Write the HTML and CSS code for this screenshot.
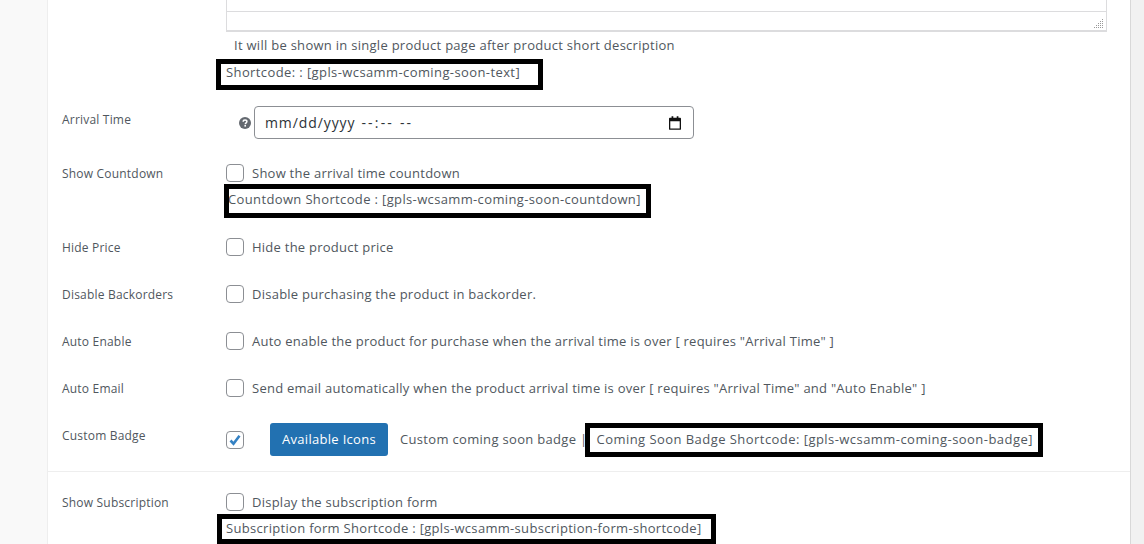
FILE: index.html
```html
<!DOCTYPE html>
<html lang="en">
<head>
<meta charset="utf-8">
<title>Coming Soon Settings</title>
<link rel="stylesheet" href="styles.css">
</head>
<body>
<main class="panel">
  <section class="group group-main">
    <div class="row row-editor">
      <div class="label"></div>
      <div class="field">
        <div class="editor">
          <div class="editor-body"></div>
          <div class="editor-status">
            <svg class="grip" width="12" height="12" viewBox="0 0 12 12"><path d="M10 1h1v1h-1zM10 3h1v1h-1zM8 3h1v1H8zM10 5h1v1h-1zM8 5h1v1H8zM6 5h1v1H6zM10 7h1v1h-1zM8 7h1v1H8zM6 7h1v1H6zM4 7h1v1H4zM10 9h1v1h-1zM8 9h1v1H8zM6 9h1v1H6zM4 9h1v1H4zM2 9h1v1H2z" fill="#999"/></svg>
          </div>
        </div>
        <p class="hint">It will be shown in single product page after product short description</p>
        <p class="code code-first"><span class="mark mark-a">Shortcode: : [gpls-wcsamm-coming-soon-text]</span></p>
      </div>
    </div>
    <div class="row row-time">
      <div class="label">Arrival Time</div>
      <div class="field field-time">
        <svg class="help" width="12" height="12" viewBox="0 0 12 12"><circle cx="6" cy="6" r="6" fill="#646970"/><path d="M4.2 4.7C4.2 3.6 5 3 6 3s1.9.6 1.9 1.6c0 1.3-1.6 1.3-1.6 2.6" fill="none" stroke="#fff" stroke-width="1.5"/><rect x="5.4" y="8" width="1.6" height="1.6" fill="#fff"/></svg>
        <div class="date">
          <span class="date-text"><span class="date-day">mm/dd/yyyy</span><span class="date-clock">--:-- --</span></span>
          <svg class="cal" width="12" height="14" viewBox="0 0 14 16"><path d="M3 0h2v2h4V0h2v2h2a1 1 0 0 1 1 1v12a1 1 0 0 1-1 1H1a1 1 0 0 1-1-1V3a1 1 0 0 1 1-1h2zM1.500 6v8.500h11V6z" fill="#111" fill-rule="evenodd"/></svg>
        </div>
      </div>
    </div>
    <div class="row row-countdown">
      <div class="label">Show Countdown</div>
      <div class="field">
        <label class="check"><input type="checkbox" class="box"><span>Show the arrival time countdown</span></label>
        <p class="code code-countdown"><span class="mark mark-b">Countdown Shortcode : [gpls-wcsamm-coming-soon-countdown]</span></p>
      </div>
    </div>
    <div class="row row-plain">
      <div class="label">Hide Price</div>
      <div class="field"><label class="check"><input type="checkbox" class="box"><span>Hide the product price</span></label></div>
    </div>
    <div class="row row-plain">
      <div class="label">Disable Backorders</div>
      <div class="field"><label class="check"><input type="checkbox" class="box"><span>Disable purchasing the product in backorder.</span></label></div>
    </div>
    <div class="row row-plain">
      <div class="label">Auto Enable</div>
      <div class="field"><label class="check"><input type="checkbox" class="box"><span>Auto enable the product for purchase when the arrival time is over [ requires "Arrival Time" ]</span></label></div>
    </div>
    <div class="row row-plain">
      <div class="label">Auto Email</div>
      <div class="field"><label class="check"><input type="checkbox" class="box"><span>Send email automatically when the product arrival time is over [ requires "Arrival Time" and "Auto Enable" ]</span></label></div>
    </div>
    <div class="row row-badge">
      <div class="label">Custom Badge</div>
      <div class="field field-badge">
        <input type="checkbox" class="box box-on" checked>
        <button class="btn" type="button">Available Icons</button>
        <span class="badge-text">Custom coming soon badge |</span>
        <span class="mark mark-c">Coming Soon Badge Shortcode: [gpls-wcsamm-coming-soon-badge]</span>
      </div>
    </div>
  </section>
  <section class="group group-sub">
    <div class="row row-sub">
      <div class="label">Show Subscription</div>
      <div class="field">
        <label class="check"><input type="checkbox" class="box"><span>Display the subscription form</span></label>
        <p class="code code-sub"><span class="mark mark-d">Subscription form Shortcode : [gpls-wcsamm-subscription-form-shortcode]</span></p>
      </div>
    </div>
  </section>
</main>
</body>
</html>
```
FILE: styles.css
```css
* { box-sizing: border-box; }
html, body { margin: 0; height: 544px; overflow: hidden; }
body {
  background: linear-gradient(to right, #f9f9f9 47px, #f1f1f1 47px);
  font-family: "Open Sans", "Noto Sans", sans-serif;
  font-size: 13px;
  letter-spacing: .25px;
  color: #50575e;
  padding-left: 47px;
  padding-right: 13px;
}
.panel {
  background: #fff;
  border-left: 1px solid #eee;
  border-right: 1px solid #d8d8d8;
  height: 544px;
  overflow: hidden;
}
.row { display: flex; }
.label { width: 178px; height: 18px; padding-left: 14px; flex: none; font-size: 12px; line-height: 20px; letter-spacing: .2px; }
.field { flex: 1; min-width: 0; }
p { margin: 0; }

.editor {
  width: 881px;
  height: 32px;
  border: 1px solid #dcdcde;
  border-top: 0;
  border-bottom: 2px solid #dcdcde;
  display: flex;
  flex-direction: column;
}
.editor-body { height: 12px; border-bottom: 1px solid #dcdcde; }
.editor-status { flex: 1; display: flex; justify-content: flex-end; align-items: flex-end; padding-right: 2px; }
.grip { display: block; }
.hint { margin: 3px 0 0 8px; line-height: 20px; letter-spacing: .28px; }
.code { line-height: 20px; }
.code-first { margin-top: 7px; }
.mark { position: relative; display: inline-block; line-height: 20px; white-space: nowrap; letter-spacing: .4px; }
.mark::after { content: ""; position: absolute; border: 5px solid #000; }
.mark-a::after { left: -10px; right: -23px; top: -3px; bottom: -8px; }
.mark-b { letter-spacing: .36px; }
.mark-b::after { left: -4px; right: -10px; top: -5px; bottom: -9px; }
.mark-c { letter-spacing: .45px; margin: 0 0 2px 9px; }
.mark-c::after { left: -12px; right: -10px; top: -6px; bottom: -8px; }
.mark-d { letter-spacing: .31px; }
.mark-d::after { left: -9px; right: -15px; top: -4px; bottom: -6px; }

.row-time { margin-top: 24px; height: 33px; }
.row-time .label { padding-top: 4px; }
.field-time { display: flex; align-items: center; padding-left: 13px; gap: 3px; }
.help { display: block; }
.date {
  width: 440px;
  height: 33px;
  border: 1px solid #8c8f94;
  border-radius: 4px;
  padding: 0 12px 0 10px;
  font-size: 14px;
  color: #2c3338;
  background: #fff;
  display: flex;
  align-items: center;
  justify-content: space-between;
}
.date-text { display: flex; gap: 6px; }
.date-day { letter-spacing: .9px; }
.date-clock { letter-spacing: 2.2px; }
.cal { display: block; }

.box {
  appearance: none;
  width: 18px;
  height: 18px;
  margin: 0 8px 0 0;
  border: 1px solid #8c8f94;
  border-radius: 4px;
  background: #fff;
  flex: none;
  display: block;
}
.box-on {
  margin-right: 0;
  background: #fff url("data:image/svg+xml,%3Csvg xmlns='http://www.w3.org/2000/svg' viewBox='0 0 16 16'%3E%3Cpath d='M3.5 8.500l3 3.200 6-8' fill='none' stroke='%233582c4' stroke-width='2.600'/%3E%3C/svg%3E") center / 16px no-repeat;
}
.check { display: flex; align-items: center; line-height: 18px; }

.row-countdown { margin-top: 25px; }
.code-countdown { margin-top: 7px; padding-left: 2px; }
.row-plain { margin-top: 29px; }
.row-badge { margin-top: 26px; height: 33px; }
.row-badge .label { padding-top: 3px; }
.field-badge { display: flex; align-items: center; height: 33px; }
.btn {
  margin-left: 26px;
  width: 118px;
  height: 33px;
  border: 0;
  border-radius: 3px;
  background: #2271b1;
  color: #fff;
  font: 13px "Open Sans", sans-serif;
  letter-spacing: .3px;
  padding: 0 0 2px;
}
.badge-text { margin: 0 0 2px 12px; white-space: nowrap; letter-spacing: .32px; }

.group-sub { border-top: 1px solid #eee; margin-top: 15px; padding-top: 21px; }
.code-sub { margin-top: 7px; }
```
